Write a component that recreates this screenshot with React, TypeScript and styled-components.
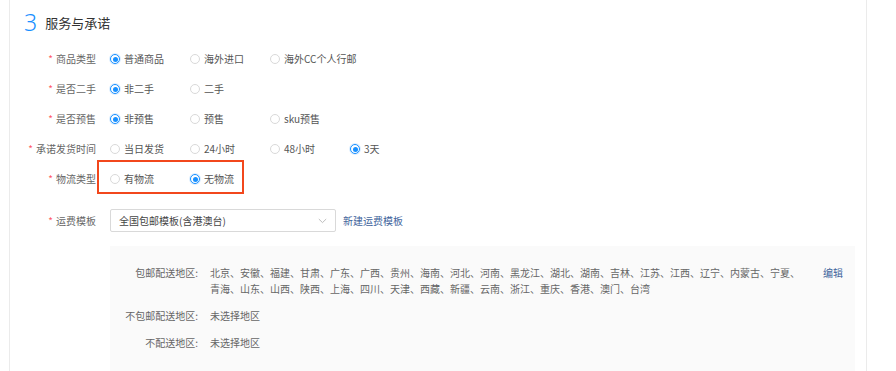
import React from 'react';
import styled, { createGlobalStyle } from 'styled-components';

const GlobalStyle = createGlobalStyle`
  html, body {
    margin: 0;
    padding: 0;
    background: #fff;
    font-family: "Noto Sans CJK SC", "Noto Sans", sans-serif;
  }
`;

const Page = styled.div`
  width: 896px;
  height: 371px;
  overflow: hidden;
  background: #fff;
`;

const Card = styled.div`
  margin-left: 9px;
  width: 858px;
  height: 371px;
  border-left: 1px solid #ebebeb;
  border-right: 1px solid #ebebeb;
  box-sizing: border-box;
  padding: 7px 0 0 14px;
`;

const Title = styled.div`
  display: flex;
  align-items: center;
  height: 30px;
  margin-bottom: 7px;
`;

const StepNo = styled.span`
  font-family: "Noto Sans", sans-serif;
  font-weight: 300;
  font-size: 23px;
  line-height: 30px;
  color: #1890ff;
  margin-right: 8px;
`;

const TitleText = styled.span`
  font-size: 13px;
  color: #333;
`;

const Row = styled.div<{ $top?: number; $h?: number }>`
  display: grid;
  grid-template-columns: 72px 1fr;
  column-gap: 14px;
  align-items: center;
  min-height: ${(p) => p.$h ?? 30}px;
  margin-top: ${(p) => p.$top ?? 0}px;
`;

const Label = styled.div`
  text-align: right;
  font-size: 10px;
  line-height: 16px;
  color: #666;
  white-space: nowrap;
`;

const Star = styled.span`
  color: #ff5a6a;
  margin-right: 3px;
`;

const Options = styled.div`
  position: relative;
  display: flex;
  align-items: center;
`;

const Option = styled.label`
  display: inline-flex;
  align-items: center;
  min-width: 80px;
  white-space: nowrap;
  font-size: 10px;
  line-height: 16px;
  color: #555;
`;

const Dot = styled.span<{ $on?: boolean }>`
  width: 10px;
  height: 10px;
  flex: none;
  box-sizing: border-box;
  border-radius: 50%;
  border: 1px solid ${(p) => (p.$on ? '#1890ff' : '#d9d9d9')};
  background: #fff;
  margin-right: 4px;
  display: inline-flex;
  align-items: center;
  justify-content: center;
  box-shadow: ${(p) => (p.$on ? '0 0 0 1px rgba(24,144,255,0.15)' : 'none')};

  &::after {
    content: '';
    width: 5px;
    height: 5px;
    border-radius: 50%;
    background: ${(p) => (p.$on ? '#1890ff' : 'transparent')};
  }
`;

const Highlight = styled.div`
  position: absolute;
  left: -13px;
  top: -11px;
  width: 147px;
  height: 34px;
  box-sizing: border-box;
  border: 2px solid #f2471c;
  pointer-events: none;
`;

const SelectLine = styled.div`
  display: flex;
  align-items: center;
`;

const Select = styled.div`
  width: 226px;
  height: 23px;
  box-sizing: border-box;
  border: 1px solid #d9d9d9;
  border-radius: 2px;
  padding: 0 8px 0 8px;
  display: flex;
  align-items: center;
  justify-content: space-between;
  font-size: 10px;
  color: #444;
`;

const Link = styled.a`
  margin-left: 7px;
  font-size: 10px;
  color: #41649c;
  text-decoration: none;
`;

const AreaBox = styled.div`
  margin: 14px 0 0 86px;
  width: 745px;
  height: 140px;
  background: #fafafa;
  box-sizing: border-box;
  padding: 19px 12px 0 0;
`;

const AreaRow = styled.div`
  display: grid;
  grid-template-columns: 88px 595px 1fr;
  column-gap: 12px;
  font-size: 10px;
  line-height: 16px;
  color: #666;
  margin-bottom: 11px;
`;

const AreaLabel = styled.div`
  text-align: right;
  white-space: nowrap;
`;

const AreaEdit = styled.a`
  text-align: right;
  color: #41649c;
  text-decoration: none;
`;

type Opt = { text: string; on?: boolean };

const rows: { label: string; opts: Opt[] }[] = [
  { label: '商品类型', opts: [{ text: '普通商品', on: true }, { text: '海外进口' }, { text: '海外CC个人行邮' }] },
  { label: '是否二手', opts: [{ text: '非二手', on: true }, { text: '二手' }] },
  { label: '是否预售', opts: [{ text: '非预售', on: true }, { text: '预售' }, { text: 'sku预售' }] },
  { label: '承诺发货时间', opts: [{ text: '当日发货' }, { text: '24小时' }, { text: '48小时' }, { text: '3天', on: true }] },
];

const freeAreas =
  '北京、安徽、福建、甘肃、广东、广西、贵州、海南、河北、河南、黑龙江、湖北、湖南、吉林、江苏、江西、辽宁、内蒙古、宁夏、青海、山东、山西、陕西、上海、四川、天津、西藏、新疆、云南、浙江、重庆、香港、澳门、台湾';

const Chevron = () => (
  <svg width="9" height="6" viewBox="0 0 9 6" fill="none">
    <path d="M0.8 1 L4.5 4.6 L8.2 1" stroke="#b5b5b5" strokeWidth="0.9" />
  </svg>
);

export default function App() {
  return (
    <Page>
      <GlobalStyle />
      <Card>
        <Title>
          <StepNo>3</StepNo>
          <TitleText>服务与承诺</TitleText>
        </Title>

        {rows.map((r) => (
          <Row key={r.label}>
            <Label>
              <Star>*</Star>
              {r.label}
            </Label>
            <Options>
              {r.opts.map((o) => (
                <Option key={o.text}>
                  <Dot $on={o.on} />
                  {o.text}
                </Option>
              ))}
            </Options>
          </Row>
        ))}

        <Row>
          <Label>
            <Star>*</Star>
            物流类型
          </Label>
          <Options>
            <Option>
              <Dot />
              有物流
            </Option>
            <Option>
              <Dot $on />
              无物流
            </Option>
            <Highlight />
          </Options>
        </Row>

        <Row $top={15} $h={23}>
          <Label>
            <Star>*</Star>
            运费模板
          </Label>
          <SelectLine>
            <Select>
              <span>全国包邮模板(含港澳台)</span>
              <Chevron />
            </Select>
            <Link href="#">新建运费模板</Link>
          </SelectLine>
        </Row>

        <AreaBox>
          <AreaRow>
            <AreaLabel>包邮配送地区:</AreaLabel>
            <div>{freeAreas}</div>
            <AreaEdit href="#">编辑</AreaEdit>
          </AreaRow>
          <AreaRow>
            <AreaLabel>不包邮配送地区:</AreaLabel>
            <div>未选择地区</div>
            <div />
          </AreaRow>
          <AreaRow>
            <AreaLabel>不配送地区:</AreaLabel>
            <div>未选择地区</div>
            <div />
          </AreaRow>
        </AreaBox>
      </Card>
    </Page>
  );
}
